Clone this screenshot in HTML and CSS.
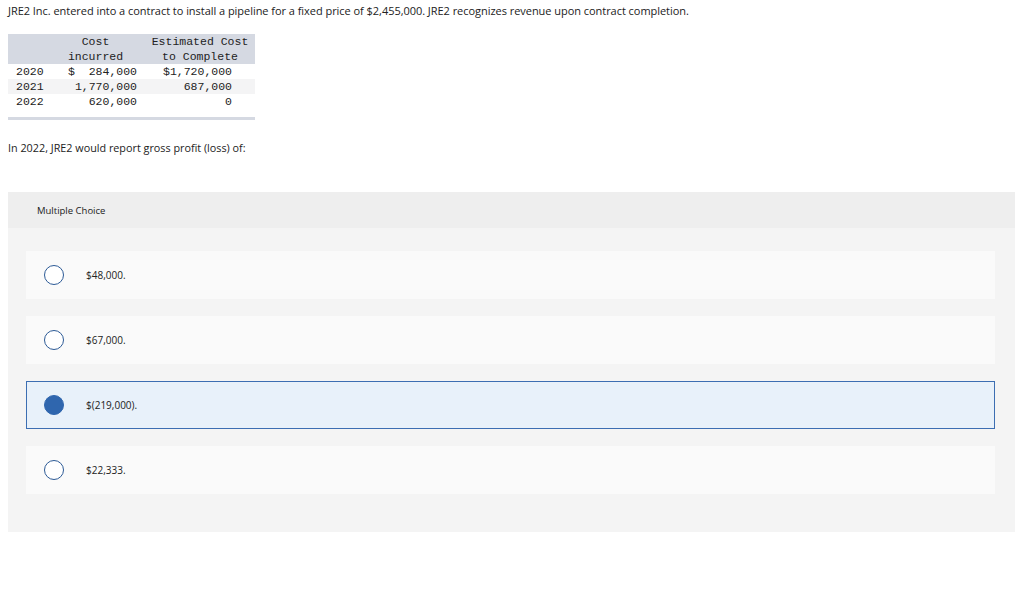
FILE: index.html
```html
<!DOCTYPE html>
<html>
<head>
<meta charset="utf-8">
<link rel="stylesheet" href="styles.css">
</head>
<body>
<div class="page">
  <p class="stem">JRE2 Inc. entered into a contract to install a pipeline for a fixed price of $2,455,000. JRE2 recognizes revenue upon contract completion.</p>
  <table class="data">
    <colgroup><col class="w1"><col class="w2"><col class="w3"></colgroup>
    <thead>
      <tr><th></th><th class="c1">Cost<br>incurred</th><th class="c2">Estimated Cost<br>to Complete</th></tr>
    </thead>
    <tbody>
      <tr><td class="yr">2020</td><td class="num">$&nbsp;&nbsp;284,000</td><td class="num n2">$1,720,000</td></tr>
      <tr class="alt"><td class="yr">2021</td><td class="num">1,770,000</td><td class="num n2">687,000</td></tr>
      <tr><td class="yr">2022</td><td class="num">620,000</td><td class="num n2">0</td></tr>
      <tr class="spacer"><td colspan="3"></td></tr>
    </tbody>
  </table>
  <p class="question">In 2022, JRE2 would report gross profit (loss) of:</p>
  <div class="mc">
    <div class="mc-head">Multiple Choice</div>
    <div class="mc-body">
      <div class="opt"><span class="radio"></span><span class="label">$48,000.</span></div>
      <div class="opt"><span class="radio"></span><span class="label">$67,000.</span></div>
      <div class="opt selected"><span class="radio"></span><span class="label">$(219,000).</span></div>
      <div class="opt"><span class="radio"></span><span class="label">$22,333.</span></div>
    </div>
  </div>
</div>
</body>
</html>
```
FILE: styles.css
```css
html, body { margin: 0; padding: 0; background: #fff; }
body { font-family: "Open Sans", "Liberation Sans", sans-serif; color: #222; }
.page { padding: 3px 8px 0 8px; width: 1007px; }
.stem { margin: 0; font-size: 11px; line-height: 16px; letter-spacing: -0.04px; color: #222; }
.data {
  margin-top: 15px;
  border-collapse: collapse;
  table-layout: fixed;
  font-family: "Liberation Mono", "DejaVu Sans Mono", monospace;
  font-size: 11.5px;
  color: #222;
  width: 247px;
}
.w1 { width: 52px; }
.w2 { width: 85px; }
.w3 { width: 110px; }
.data th { font-weight: normal; background: #d5d9e2; line-height: 15px; padding: 0; white-space: nowrap; }
.data .c1 { text-align: center; padding-right: 14px; }
.data .c2 { text-align: center; }
.data td { line-height: 15px; padding: 0; white-space: nowrap; }
.data .yr { padding-left: 8px; }
.data .num { text-align: right; padding-right: 8px; }
.data .num.n2 { padding-right: 23px; }
.data tr.alt td { background: #f4f4f5; }
.data tr.spacer td { height: 8px; border-bottom: 3px solid #d5d9e2; }
.question { margin: 20px 0 0 0; font-size: 10.8px; line-height: 16px; color: #222; }
.mc { margin-top: 36px; background: #f4f4f4; padding-bottom: 38px; }
.mc-head { background: #eeeeee; height: 36px; display: flex; align-items: center; padding-left: 29px; font-size: 9.5px; color: #222; }
.mc-body { padding: 23px 20px 0 18px; display: flex; flex-direction: column; gap: 17px; }
.opt {
  height: 48px;
  background: #fafafa;
  display: flex;
  align-items: center;
  padding-left: 17px;
  border: 1px solid transparent;
  box-sizing: border-box;
}
.opt.selected { background: #e8f1fa; border-color: #3c6eb2; }
.radio {
  width: 20px; height: 20px; border-radius: 50%;
  border: 1px solid #2c5a96; box-sizing: border-box; background: #fff;
  flex: none;
}
.selected .radio { background: #2f66ae; border-color: #2f66ae; }
.label { margin-left: 22px; font-size: 10px; color: #222; }
```
